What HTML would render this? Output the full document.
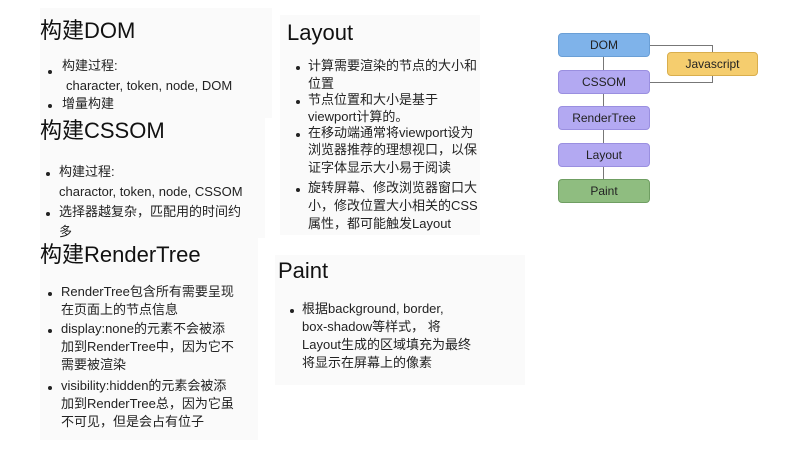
<!DOCTYPE html>
<html><head><meta charset="utf-8"><style>
body{margin:0;width:800px;height:450px;background:#fff;position:relative;overflow:hidden;font-family:"Liberation Sans","Noto Sans CJK SC",sans-serif;color:#222}
.p{position:absolute;background:#fafafa}
.t{position:absolute;white-space:nowrap;font-size:13px;line-height:18px}
.h{position:absolute;white-space:nowrap;font-size:22px;line-height:26px;color:#111}
.b{position:absolute;width:4px;height:4px;border-radius:2px;background:#222}
.box{position:absolute;border-radius:4px;font-size:12px;text-align:center;line-height:22px;color:#222;box-sizing:border-box}
.ln{position:absolute;background:#777}
</style></head><body>
<div class="p" style="left:40px;top:8px;width:232px;height:110px"></div>
<div class="p" style="left:40px;top:118px;width:225px;height:120px"></div>
<div class="p" style="left:40px;top:238px;width:218px;height:202px"></div>
<div class="p" style="left:280px;top:15px;width:200px;height:220px"></div>
<div class="p" style="left:275px;top:255px;width:250px;height:130px"></div>

<div class="h" style="left:40px;top:18px">构建DOM</div>
<div class="b" style="left:48px;top:70px"></div><div class="t" style="left:62px;top:57px">构建过程:</div>
<div class="t" style="left:66px;top:77px">character, token, node, DOM</div>
<div class="b" style="left:48px;top:104px"></div><div class="t" style="left:62px;top:95px">增量构建</div>

<div class="h" style="left:40px;top:118px">构建CSSOM</div>
<div class="b" style="left:46px;top:172px"></div><div class="t" style="left:59px;top:163px">构建过程:</div>
<div class="t" style="left:59px;top:183px">charactor, token, node, CSSOM</div>
<div class="b" style="left:46px;top:212px"></div><div class="t" style="left:59px;top:203px">选择器越复杂，匹配用的时间约</div>
<div class="t" style="left:59px;top:223px">多</div>

<div class="h" style="left:40px;top:242px">构建RenderTree</div>
<div class="b" style="left:48px;top:292px"></div><div class="t" style="left:61px;top:283px">RenderTree包含所有需要呈现</div>
<div class="t" style="left:61px;top:301px">在页面上的节点信息</div>
<div class="b" style="left:48px;top:329px"></div><div class="t" style="left:61px;top:320px">display:none的元素不会被添</div>
<div class="t" style="left:61px;top:338px">加到RenderTree中，因为它不</div>
<div class="t" style="left:61px;top:356px">需要被渲染</div>
<div class="b" style="left:48px;top:386px"></div><div class="t" style="left:61px;top:377px">visibility:hidden的元素会被添</div>
<div class="t" style="left:61px;top:395px">加到RenderTree总，因为它虽</div>
<div class="t" style="left:61px;top:413px">不可见，但是会占有位子</div>

<div class="h" style="left:287px;top:20px">Layout</div>
<div class="b" style="left:296px;top:66px"></div><div class="t" style="left:308px;top:57px">计算需要渲染的节点的大小和</div>
<div class="t" style="left:308px;top:75px">位置</div>
<div class="b" style="left:296px;top:100px"></div><div class="t" style="left:308px;top:91px">节点位置和大小是基于</div>
<div class="t" style="left:308px;top:108px">viewport计算的。</div>
<div class="b" style="left:296px;top:133px"></div><div class="t" style="left:308px;top:124px">在移动端通常将viewport设为</div>
<div class="t" style="left:308px;top:141px">浏览器推荐的理想视口，以保</div>
<div class="t" style="left:308px;top:159px">证字体显示大小易于阅读</div>
<div class="b" style="left:296px;top:188px"></div><div class="t" style="left:308px;top:179px">旋转屏幕、修改浏览器窗口大</div>
<div class="t" style="left:308px;top:197px">小，修改位置大小相关的CSS</div>
<div class="t" style="left:308px;top:215px">属性，都可能触发Layout</div>

<div class="h" style="left:278px;top:258px">Paint</div>
<div class="b" style="left:290px;top:309px"></div><div class="t" style="left:302px;top:300px">根据background, border,</div>
<div class="t" style="left:302px;top:318px">box-shadow等样式， 将</div>
<div class="t" style="left:302px;top:336px">Layout生成的区域填充为最终</div>
<div class="t" style="left:302px;top:354px">将显示在屏幕上的像素</div>

<div class="ln" style="left:603px;top:57px;width:1px;height:122px"></div>
<div class="ln" style="left:650px;top:45px;width:63px;height:1px"></div>
<div class="ln" style="left:712px;top:45px;width:1px;height:7px"></div>
<div class="ln" style="left:650px;top:82px;width:63px;height:1px"></div>
<div class="ln" style="left:712px;top:76px;width:1px;height:6px"></div>
<div class="box" style="left:558px;top:33px;width:92px;height:24px;background:#7fb3ea;border:1px solid #6a9fd6">DOM</div>
<div class="box" style="left:667px;top:52px;width:91px;height:24px;background:#f5cd6e;border:1px solid #d9ae4d">Javascript</div>
<div class="box" style="left:558px;top:70px;width:92px;height:24px;background:#b3a9f2;border:1px solid #9a8fe0">CSSOM</div>
<div class="box" style="left:558px;top:106px;width:92px;height:24px;background:#b3a9f2;border:1px solid #9a8fe0">RenderTree</div>
<div class="box" style="left:558px;top:143px;width:92px;height:24px;background:#b3a9f2;border:1px solid #9a8fe0">Layout</div>
<div class="box" style="left:558px;top:179px;width:92px;height:24px;background:#8fbd80;border:1px solid #6f9e62">Paint</div>
</body></html>
